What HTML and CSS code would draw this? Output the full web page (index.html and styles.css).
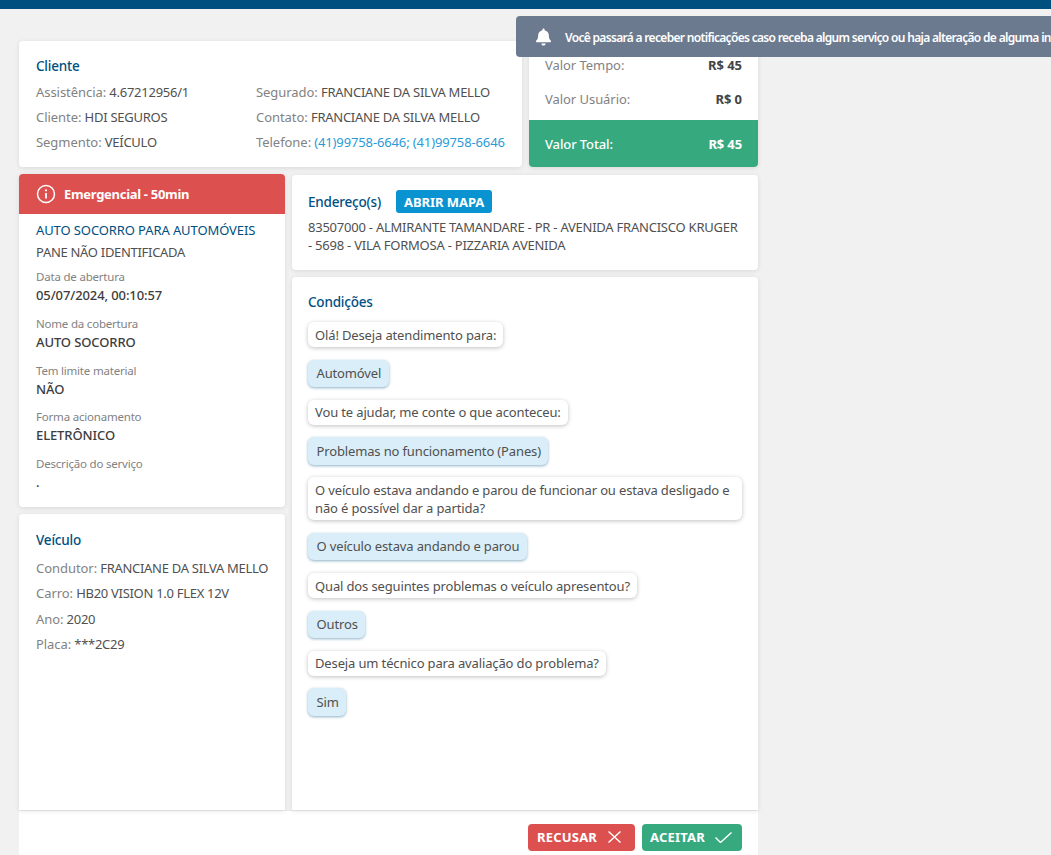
FILE: index.html
```html
<!DOCTYPE html>
<html lang="pt-BR">
<head>
<meta charset="utf-8">
<title>Serviço</title>
<link rel="stylesheet" href="styles.css">
</head>
<body>
<div class="topbar"></div>
<div class="toast">
  <svg class="bell" viewBox="0 0 448 512" width="15" height="18"><path fill="#fff" d="M224 512c35.300 0 64-28.700 64-64H160c0 35.300 28.700 64 64 64zm215.400-149.700c-19.300-20.800-55.500-52-55.500-154.300 0-77.700-54.500-139.900-127.900-155.200V32c0-17.700-14.300-32-32-32s-32 14.300-32 32v20.800C118.600 68.100 64.100 130.300 64.100 208c0 102.300-36.200 133.500-55.500 154.300-6 6.400-8.700 14.100-8.600 21.700.1 16.400 13 32 32.100 32h383.800c19.100 0 32-15.600 32.100-32 .1-7.600-2.600-15.300-8.600-21.700z"/></svg>
  <span class="toast-text">Você passará a receber notificações caso receba algum serviço ou haja alteração de alguma informação</span>
</div>
<main class="page">
  <div class="row-top">
    <section class="card client">
      <h2 class="title">Cliente</h2>
      <div class="client-grid">
        <div class="client-col first">
          <p class="line"><span class="lbl">Assistência:</span> 4.67212956/1</p>
          <p class="line"><span class="lbl">Cliente:</span> HDI SEGUROS</p>
          <p class="line"><span class="lbl">Segmento:</span> VEÍCULO</p>
        </div>
        <div class="client-col">
          <p class="line"><span class="lbl">Segurado:</span> FRANCIANE DA SILVA MELLO</p>
          <p class="line"><span class="lbl">Contato:</span> FRANCIANE DA SILVA MELLO</p>
          <p class="line"><span class="lbl">Telefone:</span> <span class="link">(41)99758-6646; (41)99758-6646</span></p>
        </div>
      </div>
    </section>
    <section class="card values">
      <div class="val-rows">
        <div class="val-row"><span class="lbl">Valor Tempo:</span><b>R$ 45</b></div>
        <div class="val-row"><span class="lbl">Valor Usuário:</span><b>R$ 0</b></div>
      </div>
      <div class="val-total"><span>Valor Total:</span><b>R$ 45</b></div>
    </section>
  </div>
  <div class="row-main">
    <div class="col-left">
      <section class="card service">
        <div class="urgency">
          <svg class="info" viewBox="0 0 20 20" width="20" height="20"><circle cx="10" cy="10" r="8.500" fill="none" stroke="#fff" stroke-width="1.500"/><path d="M10 9v5.500" stroke="#fff" stroke-width="1.800" fill="none"/><circle cx="10" cy="6.300" r="1.100" fill="#fff"/></svg>
          <span>Emergencial - 50min</span>
        </div>
        <div class="service-body">
          <h3 class="svc-title">AUTO SOCORRO PARA AUTOMÓVEIS</h3>
          <p class="svc-sub">PANE NÃO IDENTIFICADA</p>
          <div class="field"><span class="f-label">Data de abertura</span><span class="f-value">05/07/2024, 00:10:57</span></div>
          <div class="field"><span class="f-label">Nome da cobertura</span><span class="f-value">AUTO SOCORRO</span></div>
          <div class="field"><span class="f-label">Tem limite material</span><span class="f-value">NÃO</span></div>
          <div class="field"><span class="f-label">Forma acionamento</span><span class="f-value">ELETRÔNICO</span></div>
          <div class="field"><span class="f-label">Descrição do serviço</span><span class="f-value">.</span></div>
        </div>
      </section>
      <section class="card vehicle">
        <h2 class="title">Veículo</h2>
        <p class="vline"><span class="lbl">Condutor:</span> FRANCIANE DA SILVA MELLO</p>
        <p class="vline"><span class="lbl">Carro:</span> HB20 VISION 1.0 FLEX 12V</p>
        <p class="vline"><span class="lbl">Ano:</span> 2020</p>
        <p class="vline"><span class="lbl">Placa:</span> ***2C29</p>
      </section>
    </div>
    <div class="col-right">
      <section class="card address">
        <div class="addr-head"><h2 class="title">Endereço(s)</h2><span class="map-btn">ABRIR MAPA</span></div>
        <p class="addr-text">83507000 - ALMIRANTE TAMANDARE - PR - AVENIDA FRANCISCO KRUGER - 5698 - VILA FORMOSA - PIZZARIA AVENIDA</p>
      </section>
      <section class="card conditions">
        <h2 class="title">Condições</h2>
        <div class="chat">
          <div class="bubble">Olá! Deseja atendimento para:</div>
          <div class="bubble answer">Automóvel</div>
          <div class="bubble">Vou te ajudar, me conte o que aconteceu:</div>
          <div class="bubble answer">Problemas no funcionamento (Panes)</div>
          <div class="bubble">O veículo estava andando e parou de funcionar ou estava desligado e não é possível dar a partida?</div>
          <div class="bubble answer">O veículo estava andando e parou</div>
          <div class="bubble">Qual dos seguintes problemas o veículo apresentou?</div>
          <div class="bubble answer">Outros</div>
          <div class="bubble">Deseja um técnico para avaliação do problema?</div>
          <div class="bubble answer">Sim</div>
        </div>
      </section>
    </div>
  </div>
  <footer class="actions">
    <span class="btn refuse">RECUSAR
      <svg viewBox="0 0 13 12" width="13" height="12"><path d="M.5.500l12 11M12.500.500l-12 11" stroke="#fff" stroke-width="1.400" fill="none"/></svg>
    </span>
    <span class="btn accept">ACEITAR
      <svg viewBox="0 0 17 11" width="17" height="11"><path d="M.5 5.500l5 5L16.500.500" stroke="#fff" stroke-width="1.400" fill="none"/></svg>
    </span>
  </footer>
</main>
</body>
</html>
```
FILE: styles.css
```css
* { box-sizing: border-box; }
html, body { margin: 0; height: 855px; overflow: hidden; }
body {
  background: #f1f1f1;
  font-family: "Noto Sans", "Open Sans", sans-serif;
  font-size: 13px;
  color: #505050;
}
p, h2, h3 { margin: 0; font-weight: 400; }
.topbar { height: 9px; background: #00507f; }
.toast {
  position: absolute;
  top: 16px;
  left: 516px;
  width: 535px;
  height: 41px;
  background: #6c7a8f;
  border-radius: 4px 0 0 4px;
  color: #fff;
  display: flex;
  align-items: center;
  padding-left: 20px;
  overflow: hidden;
  white-space: nowrap;
  font-size: 12px;
  font-weight: 600;
  z-index: 2;
}
.bell { flex: none; margin-right: 14px; }
.toast-text { letter-spacing: -0.68px; padding-top: 2px; }
.page { width: 739px; margin-left: 19px; padding-top: 32px; }
.card { background: #fff; border-radius: 4px; box-shadow: 0 1px 5px rgba(0,0,0,.1); }
.row-top { display: flex; gap: 7px; height: 126px; }
.client { width: 503px; padding: 16px 15px 0 17px; }
.title { color: #00507f; font-size: 13.500px; line-height: 18px; letter-spacing: -0.2px; font-weight: 500; }
.client-grid { display: flex; margin-top: 5px; }
.client-col.first { width: 220px; }
.line { line-height: 25px; letter-spacing: -0.25px; white-space: nowrap; }
.lbl { color: #828282; letter-spacing: -0.05px; }
.link { color: #2b9bd6; letter-spacing: -0.13px; }
.values { width: 229px; display: flex; flex-direction: column; overflow: hidden; }
.val-rows { flex: 1; padding: 7px 16px 4px; display: flex; flex-direction: column; justify-content: flex-end; }
.val-row { display: flex; justify-content: space-between; height: 34px; align-items: center; letter-spacing: -0.05px; }
.val-row b, .val-total b { font-weight: 700; }
.val-row b { color: #444; }
.val-total {
  height: 47px;
  background: #36a97f;
  color: #fff;
  display: flex;
  justify-content: space-between;
  align-items: center;
  padding: 0 16px;
  font-weight: 500;
  letter-spacing: -0.12px;
}
.row-main { display: flex; gap: 7px; margin-top: 7px; height: 636px; }
.col-left { width: 266px; display: flex; flex-direction: column; gap: 7px; }
.col-right { width: 466px; display: flex; flex-direction: column; gap: 7px; padding-top: 1px; }
.service { height: 333px; overflow: hidden; }
.urgency {
  height: 40px;
  background: #dd5050;
  color: #fff;
  display: flex;
  align-items: center;
  gap: 8px;
  padding-left: 17px;
  font-weight: 700;
  letter-spacing: -0.3px;
}
.service-body { padding: 7px 17px 0; }
.svc-title { color: #00507f; font-size: 13px; line-height: 18px; letter-spacing: -0.1px; }
.svc-sub { line-height: 20px; margin-top: 3px; letter-spacing: -0.3px; }
.field { display: flex; flex-direction: column; margin-top: 7px; margin-bottom: 10.250px; }
.f-label { font-size: 11.500px; line-height: 16px; color: #828282; letter-spacing: -0.2px; }
.f-value { line-height: 20.500px; font-weight: 500; color: #3c3c3c; letter-spacing: -0.1px; }
.vehicle { flex: 1; padding: 17px 8px 0 17px; border-radius: 4px 4px 0 0; }
.vehicle .title { margin-bottom: 7px; }
.vline { line-height: 25.300px; letter-spacing: -0.29px; white-space: nowrap; }
.address { height: 95px; padding: 15px 17px 0 16px; }
.addr-head { display: flex; align-items: center; gap: 15px; }
.map-btn {
  background: #0a93d1;
  color: #fff;
  border-radius: 3px;
  height: 23px;
  padding: 0 8px;
  display: flex;
  align-items: center;
  font-weight: 700;
  letter-spacing: -0.05px;
}
.addr-text { margin-top: 5px; line-height: 18px; letter-spacing: -0.23px; }
.conditions { flex: 1; padding: 16px 16px 0; border-radius: 4px 4px 0 0; }
.chat { display: flex; flex-direction: column; align-items: flex-start; gap: 12.600px; margin-top: 11px; }
.bubble {
  background: #fff;
  border-radius: 6px;
  box-shadow: 0 1px 4px rgba(0,0,0,.25);
  padding: 3.500px 7px;
  line-height: 18px;
  letter-spacing: -0.14px;
  max-width: 435px;
}
.bubble.answer {
  background: #d9eef8;
  box-shadow: 0 1px 3px rgba(0,80,127,.45);
  padding: 4.500px 7.500px 4.500px 8.500px;
  line-height: 18.500px;
}
.actions {
  height: 45px;
  background: #fff;
  border-top: 1px solid #eaeaea;
  display: flex;
  justify-content: flex-end;
  align-items: flex-start;
  gap: 7px;
  padding: 13px 16px 0 0;
}
.btn {
  height: 27px;
  border-radius: 4px;
  color: #fff;
  font-weight: 700;
  display: flex;
  align-items: center;
  gap: 11px;
  padding: 0 9px 1px;
  letter-spacing: 0.2px;
}
.refuse { background: #dd5050; width: 107px; }
.accept { background: #36a97f; width: 100px; padding-left: 8px; gap: 10px; }
```
